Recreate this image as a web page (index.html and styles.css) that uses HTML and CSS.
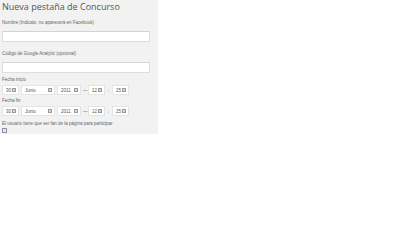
FILE: index.html
```html
<!DOCTYPE html>
<html>
<head>
  <meta charset=utf-8>
  <title>Nueva pestaña de Concurso</title>
<link rel="stylesheet" href="styles.css">
</head>
<body>
<div class=panel>
  <h1>Nueva pestaña de Concurso</h1>

  <label class=lbl>Nombre (Indicalo, no aparecerá en Facebook)</label>
  <div class=field></div>

  <label class=lbl>Código de Google Analytic (opcional)</label>
  <div class=field></div>

  <label class='lbl date'>Fecha inicio</label>
  <div class=dateRow>
    <span class='sel w17'>30<i></i></span>
    <span class='sel w34'>Junio<i></i></span>
    <span class='sel w23'>2011<i></i></span>
    <span class=sep>—</span>
    <span class='sel w17'>12<i></i></span>
    <span class=sep>:</span>
    <span class='sel w17'>25<i></i></span>
  </div>

  <label class='lbl date'>Fecha fin</label>
  <div class=dateRow>
    <span class='sel w17'>30<i></i></span>
    <span class='sel w34'>Junio<i></i></span>
    <span class='sel w23'>2011<i></i></span>
    <span class=sep>—</span>
    <span class='sel w17'>12<i></i></span>
    <span class=sep>:</span>
    <span class='sel w17'>25<i></i></span>
  </div>

  <label class='lbl fan'>El usuario tiene que ser fan de la página para participar</label>
  <div class=check></div>
</div>
</body>
</html>
```

FILE: styles.css
```css
* {
  box-sizing: border-box;
  }
html, body {
  margin: 0;
  padding: 0;
  background: #fff;
  }
.panel {
  width: 158px;
  height: 134px;
  background: #f2f2f2;
  padding: 0 0 0 2px;
  font: normal 4.5px "Liberation Sans", Arial, sans-serif;
  color: #666;
  }
h1 {
  margin: 0 0 7px;
  padding-top: 1px;
  height: 13px;
  font: normal 9px "Open Sans", sans-serif;
  color: #555;
  line-height: 12px;
  white-space: nowrap;
  }
.lbl {
  display: block;
  line-height: 6px;
  height: 6px;
  margin-bottom: 5px;
  }
.lbl.date {
  margin-bottom: 2px;
  }
.lbl.fan {
  margin-bottom: 1px;
  }
.field {
  width: 148px;
  height: 11px;
  background: #fff;
  border: 1px solid #dedede;
  border-top-color: #d4d4d4;
  margin-bottom: 9px;
  }
.field + .lbl.date {
  margin-top: -5px;
  }
.dateRow {
  display: flex;
  align-items: center;
  gap: 2px;
  height: 10px;
  margin-bottom: 3px;
  color: #555;
  }
.dateRow + .lbl.fan {
  margin-top: 5px;
  }
.sel {
  display: flex;
  align-items: center;
  justify-content: space-between;
  height: 10px;
  padding: 0 2px 0 3px;
  background: #fff;
  border: 1px solid #e4e4e4;
  }
.sel i {
  width: 4px;
  height: 4px;
  background: #d8d8d8;
  border: 1px solid #9a9a9a;
  }
.w17 { width: 17px; }
.w23 { width: 24px; }
.w34 { width: 34px; }
.sep {
  width: 3px;
  text-align: center;
  }
.check {
  width: 5px;
  height: 5px;
  border: 1px solid #8a8fa8;
  background: #e6e8f2;
  }
```
